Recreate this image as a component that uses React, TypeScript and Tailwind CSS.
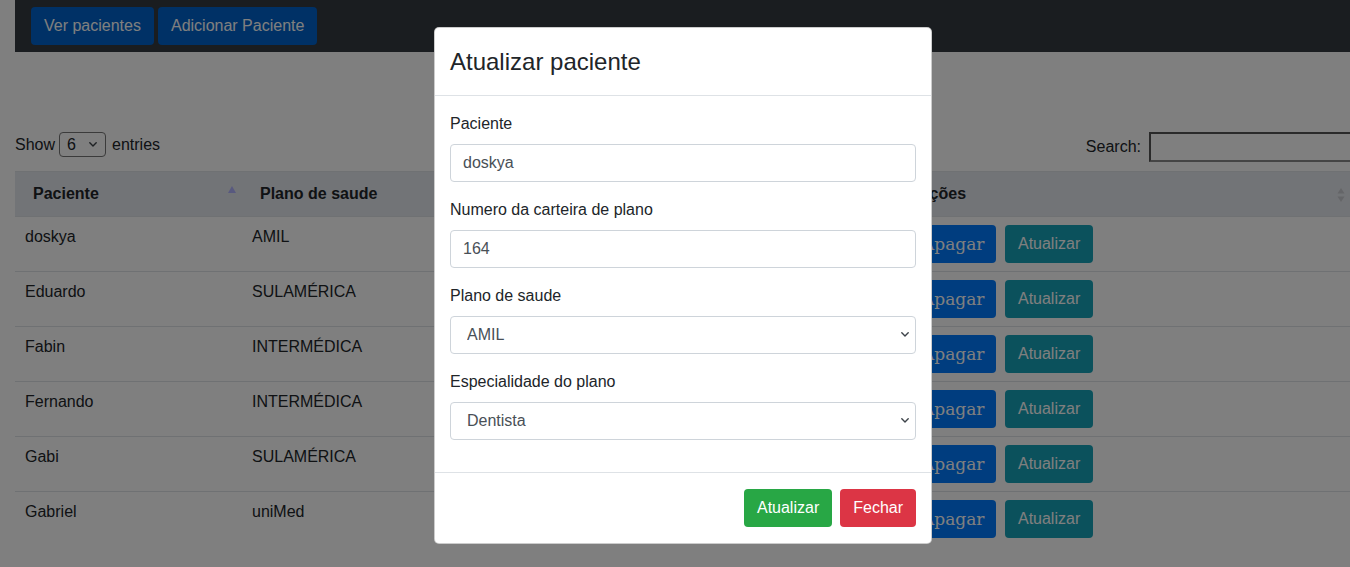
import React from "react";

const rows = [
  ["doskya", "AMIL", "164", "Dentista"],
  ["Eduardo", "SULAMÉRICA", "231", "Clínico geral"],
  ["Fabin", "INTERMÉDICA", "412", "Ortopedista"],
  ["Fernando", "INTERMÉDICA", "518", "Cardiologista"],
  ["Gabi", "SULAMÉRICA", "623", "Dentista"],
  ["Gabriel", "uniMed", "735", "Pediatra"],
];

function SortBoth() {
  return (
    <svg width="8" height="16" viewBox="0 0 8 16" className="absolute right-[5px] top-[15px]">
      <path d="M4 1 L7.5 6.5 H0.5 Z" fill="#c9cbd0" />
      <path d="M4 15 L7.5 9.5 H0.5 Z" fill="#c9cbd0" />
    </svg>
  );
}

function SortAsc() {
  return (
    <svg width="8" height="7" viewBox="0 0 8 7" className="absolute right-[6px] top-[14px]">
      <path d="M4 0 L8 7 H0 Z" fill="#b0b2ff" />
    </svg>
  );
}

function Chevron({ className }: { className: string }) {
  return (
    <svg width="8" height="5" viewBox="0 0 8 5" className={className} fill="none">
      <path d="M0.8 0.8 L4 4 L7.2 0.8" stroke="#3d4349" strokeWidth="1.4" strokeLinecap="round" strokeLinejoin="round" />
    </svg>
  );
}

function ModalSelect({ value, options }: { value: string; options: string[] }) {
  return (
    <div className="relative">
      <select
        defaultValue={value}
        className="block h-[38px] w-full appearance-none rounded-[4px] border border-[#ced4da] bg-white pl-4 pr-8 text-[16px] text-[#495057] outline-none"
      >
        {options.map((o) => (
          <option key={o}>{o}</option>
        ))}
      </select>
      <Chevron className="pointer-events-none absolute right-[7px] top-[16px]" />
    </div>
  );
}

export default function App() {
  return (
    <div className="relative h-[567px] w-[1350px] overflow-hidden bg-white font-['Liberation_Sans',Arial,sans-serif] text-[16px] text-[#212529]">
      <nav className="ml-[15px] flex h-[52px] items-center gap-[4px] bg-[#343a40] px-4">
        <button className="h-[38px] rounded-[4px] bg-[#0062cc] px-[13px] text-white">Ver pacientes</button>
        <button className="h-[38px] rounded-[4px] bg-[#0062cc] px-[13px] text-white">Adicionar Paciente</button>
      </nav>

      <div className="ml-[15px] mt-[80px] flex h-[30px] w-[1350px] items-start justify-between">
        <div className="flex h-[25px] items-center">
          <span>Show</span>
          <div className="relative ml-[4px] mr-[6px]">
            <select defaultValue="6" className="block h-[25px] w-[47px] appearance-none rounded-[4px] border border-[#767676] bg-white pl-[7px] text-[16px] text-[#212529] outline-none">
              <option>6</option>
              <option>10</option>
            </select>
            <Chevron className="pointer-events-none absolute right-[9px] top-[10px]" />
          </div>
          <span>entries</span>
        </div>
        <div className="flex h-[30px] items-center gap-2">
          <span>Search:</span>
          <input className="h-[30px] w-[216px] border-2 border-[#8a8a8a] border-t-[#555] border-l-[#555] bg-white outline-none" />
        </div>
      </div>

      <table className="ml-[15px] mt-[9px] w-[1335px] table-fixed border-collapse">
        <colgroup>
          <col className="w-[227px]" />
          <col className="w-[318px]" />
          <col className="w-[340px]" />
          <col className="w-[450px]" />
        </colgroup>
        <thead>
          <tr className="bg-[#e5e8ee] text-left">
            <th className="relative border-y border-[#dee2e6] py-[10px] pl-[18px] pr-[18px] font-bold leading-6">
              Paciente
              <SortAsc />
            </th>
            <th className="relative border-y border-[#dee2e6] py-[10px] pl-[18px] font-bold leading-6">Plano de saude</th>
            <th className="relative border-y border-[#dee2e6] py-[10px] pl-[18px] font-bold leading-6">Numero da carteira</th>
            <th className="relative border-y border-[#dee2e6] py-[10px] pl-[18px] font-bold leading-6">
              Ações
              <SortBoth />
            </th>
          </tr>
        </thead>
        <tbody>
          {rows.map((r) => (
            <tr key={r[0]} className="border-b border-[#dee2e6] last:border-b-0">
              <td className="px-[10px] py-[8px] align-top leading-6">{r[0]}</td>
              <td className="px-[10px] py-[8px] align-top leading-6">{r[1]}</td>
              <td className="px-[10px] py-[8px] align-top leading-6">{r[2]}</td>
              <td className="px-[10px] py-[8px] align-top leading-6">
                <div className="flex gap-[9px]">
                  <button className="h-[38px] rounded-[4px] bg-[#007bff] px-3 font-['DejaVu_Serif',serif] text-[17px] text-white">Apagar</button>
                  <button className="h-[38px] rounded-[4px] bg-[#17a2b8] px-[12.5px] text-white">Atualizar</button>
                </div>
              </td>
            </tr>
          ))}
        </tbody>
      </table>

      <div className="absolute inset-0 bg-black/50" />

      <div className="absolute left-[434px] top-[27px] w-[498px] rounded-[5px] border border-black/20 bg-white">
        <div className="border-b border-[#dee2e6] px-[15px] pb-[15px] pt-[16px]">
          <h5 className="text-[24px] font-medium leading-[36px]">Atualizar paciente</h5>
        </div>
        <div className="px-[15px] py-4">
          <div className="mb-4">
            <label className="mb-2 block leading-6">Paciente</label>
            <input defaultValue="doskya" className="block h-[38px] w-full rounded-[4px] border border-[#ced4da] px-3 text-[#495057] outline-none" />
          </div>
          <div className="mb-4">
            <label className="mb-2 block leading-6">Numero da carteira de plano</label>
            <input defaultValue="164" className="block h-[38px] w-full rounded-[4px] border border-[#ced4da] px-3 text-[#495057] outline-none" />
          </div>
          <div className="mb-4">
            <label className="mb-2 block leading-6">Plano de saude</label>
            <ModalSelect value="AMIL" options={["AMIL", "SULAMÉRICA", "INTERMÉDICA", "uniMed"]} />
          </div>
          <div className="mb-4">
            <label className="mb-2 block leading-6">Especialidade do plano</label>
            <ModalSelect value="Dentista" options={["Dentista", "Clínico geral"]} />
          </div>
        </div>
        <div className="flex justify-end gap-2 border-t border-[#dee2e6] px-[15px] py-4">
          <button className="h-[38px] rounded-[4px] bg-[#28a745] px-[13px] text-white">Atualizar</button>
          <button className="h-[38px] rounded-[4px] bg-[#dc3545] px-[13px] text-white">Fechar</button>
        </div>
      </div>
    </div>
  );
}
